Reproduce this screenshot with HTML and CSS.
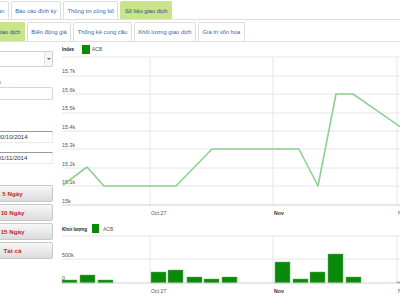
FILE: index.html
```html
<!DOCTYPE html>
<html>
<head>
<meta charset="utf-8">
<link rel="stylesheet" href="styles.css">
</head>
<body>
<div class="page">
  <div class="tabs tabs-top">
    <div class="tab">Tổng quan</div>
    <div class="tab">Báo cáo định kỳ</div>
    <div class="tab">Thông tin công bố</div>
    <div class="tab active">Số liệu giao dịch</div>
  </div>
  <div class="tabs tabs-sub">
    <div class="tab active">Lịch sử giao dịch</div>
    <div class="tab">Biến động giá</div>
    <div class="tab">Thống kê cung cầu</div>
    <div class="tab">Khối lượng giao dịch</div>
    <div class="tab">Giá trị vốn hóa</div>
  </div>
  <div class="main">
    <aside class="side">
      <div class="select"><span class="select-val">ACB</span><span class="arrow"></span></div>
      <div class="lbl">Mã so sánh</div>
      <div class="input"></div>
      <div class="date date-from">30/10/2014</div>
      <div class="date date-to">01/11/2014</div>
      <div class="btns">
        <div class="btn">5 Ngày</div>
        <div class="btn">10 Ngày</div>
        <div class="btn">15 Ngày</div>
        <div class="btn">Tất cả</div>
      </div>
    </aside>
    <div class="chart">
      <svg class="chart-svg" width="344" height="258" viewBox="56 42 344 258" xmlns="http://www.w3.org/2000/svg">
        <g class="legend">
          <text x="62" y="51" class="leg-title">Index</text>
          <rect x="82" y="45" width="8" height="9" class="bar"/>
          <text x="92" y="51" class="leg-name">ACB</text>
        </g>
        <g class="grid">
          <line x1="62" y1="57" x2="400" y2="57"/>
          <line x1="62" y1="76" x2="400" y2="76"/>
          <line x1="62" y1="94" x2="400" y2="94"/>
          <line x1="62" y1="113" x2="400" y2="113"/>
          <line x1="62" y1="131" x2="400" y2="131"/>
          <line x1="62" y1="149" x2="400" y2="149"/>
          <line x1="62" y1="168" x2="400" y2="168"/>
          <line x1="62" y1="186" x2="400" y2="186"/>
          <line x1="150" y1="57" x2="150" y2="205"/>
          <line x1="273" y1="57" x2="273" y2="205"/>
          <line x1="397" y1="57" x2="397" y2="205"/>
        </g>
        <line class="axis" x1="62" y1="205" x2="400" y2="205"/>
        <g class="ylab">
          <text x="62" y="73">15.7k</text>
          <text x="62" y="92">15.6k</text>
          <text x="62" y="110">15.5k</text>
          <text x="62" y="129">15.4k</text>
          <text x="62" y="147">15.3k</text>
          <text x="62" y="166">15.2k</text>
          <text x="62" y="184">15.1k</text>
          <text x="62" y="203">15k</text>
        </g>
        <g class="xlab">
          <text x="151" y="215">Oct 27</text>
          <text x="274" y="215" class="strong">Nov</text>
          <text x="398" y="215">Nov 10</text>
        </g>
        <polyline class="line" points="63,185 87,167 104,186 176,186 212,149 299,149 318,186 336,94 353,94 402,128"/>

        <g class="legend">
          <text x="62" y="231" class="leg-title">Khối lượng</text>
          <rect x="92" y="224" width="7" height="9" class="bar"/>
          <text x="103" y="231" class="leg-name">ACB</text>
        </g>
        <g class="grid">
          <line x1="62" y1="236" x2="400" y2="236"/>
          <line x1="62" y1="259" x2="400" y2="259"/>
          <line x1="150" y1="236" x2="150" y2="283"/>
          <line x1="273" y1="236" x2="273" y2="283"/>
          <line x1="397" y1="236" x2="397" y2="283"/>
        </g>
        <g class="ylab">
          <text x="62" y="257">500k</text>
          <text x="62" y="280">0</text>
        </g>
        <g class="bars">
          <rect x="62" y="280" width="15" height="3"/>
          <rect x="80" y="275" width="15" height="8"/>
          <rect x="98" y="280" width="15" height="3"/>
          <rect x="151" y="272" width="15" height="11"/>
          <rect x="168" y="270" width="15" height="13"/>
          <rect x="187" y="277" width="15" height="6"/>
          <rect x="204" y="279" width="15" height="4"/>
          <rect x="222" y="277" width="15" height="6"/>
          <rect x="275" y="262" width="15" height="21"/>
          <rect x="293" y="279" width="15" height="4"/>
          <rect x="310" y="272" width="15" height="11"/>
          <rect x="328" y="254" width="15" height="29"/>
          <rect x="346" y="277" width="15" height="6"/>
          <rect x="397" y="282" width="15" height="1"/>
        </g>
        <line class="axis" x1="62" y1="283" x2="400" y2="283"/>
        <g class="xlab">
          <text x="151" y="293">Oct 27</text>
          <text x="274" y="293" class="strong">Nov</text>
          <text x="398" y="293">Nov 10</text>
        </g>
      </svg>
    </div>
  </div>
</div>
</body>
</html>
```
FILE: styles.css
```css
* { box-sizing: border-box; }
html, body { margin: 0; padding: 0; background: #fff; }
body {
  width: 400px;
  height: 300px;
  overflow: hidden;
  font-family: "Liberation Sans", Arial, sans-serif;
}
.page {
  margin-left: -28px;
  width: 440px;
}
.tabs {
  display: flex;
  gap: 2px;
  border-bottom: 1px solid #e0e0e0;
}
.tabs-top {
  height: 20px;
  padding-top: 1px;
}
.tabs-sub {
  height: 22px;
  padding-top: 2px;
}
.tab {
  display: flex;
  align-items: center;
  padding: 0 3.5px;
  border: 1px solid #dedede;
  border-bottom: none;
  border-radius: 2px 2px 0 0;
  background: #fff;
  color: #3866aa;
  font-size: 5.8px;
  white-space: nowrap;
}
.tab.active {
  background: #c8e58c;
  border-color: #c8e58c;
  color: #2d4c7e;
}
.main {
  display: flex;
}
.side {
  width: 81px;
  flex: none;
  padding-top: 9px;
  display: flex;
  flex-direction: column;
  font-size: 6px;
  color: #333;
}
.select {
  height: 16px;
  border: 1px solid #cfcfcf;
  border-radius: 2px;
  display: flex;
  align-items: center;
  justify-content: space-between;
  padding-left: 3px;
  background: #fff;
}
.select-val { color: #333; }
.arrow {
  width: 8px;
  height: 14px;
  border-left: 1px solid #e2e2e2;
  display: flex;
  align-items: center;
  justify-content: center;
  background: #f6f6f6;
}
.arrow::after {
  content: "";
  border-left: 2px solid transparent;
  border-right: 2px solid transparent;
  border-top: 2.5px solid #666;
}
.lbl {
  margin-top: 11px;
  line-height: 8px;
  font-size: 5.6px;
  color: #666;
}
.input {
  margin-top: 1px;
  height: 13px;
  border: 1px solid #d6d6d6;
  border-radius: 1px;
}
.date {
  height: 12px;
  line-height: 11px;
  text-align: center;
  border: 1px solid #ececec;
  border-top: 1px solid #9a9a9a;
  color: #333;
}
.date-from { margin-top: 31px; }
.date-to { margin-top: 9px; }
.btns {
  margin-top: 21px;
  display: flex;
  flex-direction: column;
  gap: 2px;
}
.btn {
  height: 17px;
  display: flex;
  align-items: center;
  justify-content: center;
  border: 1px solid #c9c9c9;
  border-radius: 2px;
  background: linear-gradient(#f7f7f7, #dcdcdc);
  color: #c2262d;
  font-weight: bold;
  font-size: 6.2px;
}
.chart {
  margin-left: 3px;
  flex: none;
}
.chart-svg {
  display: block;
  font-family: "Liberation Sans", Arial, sans-serif;
}
.grid line { stroke: #e6e6e6; stroke-width: 1; }
.axis { stroke: #cfcfcf; stroke-width: 1; }
.ylab text { font-size: 5.4px; fill: #555; }
.xlab text { font-size: 5.2px; fill: #555; }
.xlab .strong { font-weight: bold; fill: #333; }
.leg-title { font-size: 4.6px; font-weight: bold; fill: #222; }
.leg-name { font-size: 5px; fill: #555; }
.bar { fill: #088a08; }
.line { fill: none; stroke: #8fd08f; stroke-width: 1.6; stroke-linejoin: round; }
.bars rect { fill: #0a890a; stroke: #5db85d; stroke-width: 0.5; }
```
